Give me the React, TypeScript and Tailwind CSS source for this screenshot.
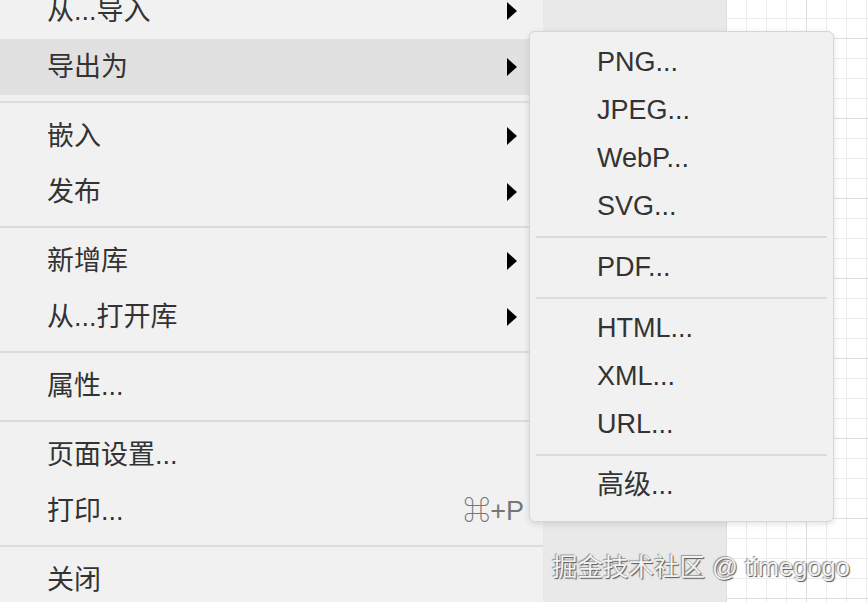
import React from "react";

type Item = { label: string; arrow?: boolean; hover?: boolean; shortcut?: string } | "sep";

const mainItems: Item[] = [
  { label: "从...导入", arrow: true },
  { label: "导出为", arrow: true, hover: true },
  "sep",
  { label: "嵌入", arrow: true },
  { label: "发布", arrow: true },
  "sep",
  { label: "新增库", arrow: true },
  { label: "从...打开库", arrow: true },
  "sep",
  { label: "属性..." },
  "sep",
  { label: "页面设置..." },
  { label: "打印...", shortcut: "⌘+P" },
  "sep",
  { label: "关闭" },
];

const subItems: (string | "sep")[] = [
  "PNG...",
  "JPEG...",
  "WebP...",
  "SVG...",
  "sep",
  "PDF...",
  "sep",
  "HTML...",
  "XML...",
  "URL...",
  "sep",
  "高级...",
];

const font = { fontFamily: '"Liberation Sans", "Noto Sans CJK SC", sans-serif' };

function Arrow() {
  return (
    <svg width="10" height="18" viewBox="0 0 10 18" className="shrink-0">
      <path d="M0 0 L10 9 L0 18 Z" fill="#000" />
    </svg>
  );
}

export default function App() {
  return (
    <div className="relative flex h-[602px] w-[868px] overflow-hidden text-[#333]" style={font}>
      {/* main menu */}
      <div className="w-[543px] shrink-0 bg-[#f1f1f1]">
        <div className="-mt-[17px]">
          {mainItems.map((it, i) =>
            it === "sep" ? (
              <div key={i} className="flex h-[13px] items-center">
                <div className="h-[2px] w-full bg-[#dcdcdc]" />
              </div>
            ) : (
              <div
                key={i}
                className={`flex h-[56px] items-center justify-between pl-[47px] pr-[26px] text-[27px] ${
                  it.hover ? "bg-[#e1e1e1]" : ""
                }`}
              >
                <span>{it.label}</span>
                {it.arrow && <Arrow />}
                {it.shortcut && <span className="-mr-[7px] text-[#777]">{it.shortcut}</span>}
              </div>
            )
          )}
        </div>
      </div>

      {/* side panel */}
      <div className="w-[183px] shrink-0 bg-[#e9e9e9]" />

      {/* grid canvas */}
      <div
        className="flex-1 bg-white"
        style={{
          backgroundImage:
            "linear-gradient(to right, #dedede 1px, transparent 1px), linear-gradient(to bottom, #dedede 1px, transparent 1px), linear-gradient(to right, #ececec 1px, transparent 1px), linear-gradient(to bottom, #ececec 1px, transparent 1px)",
          backgroundSize: "80px 80px, 80px 80px, 20px 20px, 20px 20px",
          backgroundPosition: "0 38px, 0 38px, 0 18px, 0 18px",
        }}
      />

      {/* submenu */}
      <div className="absolute left-[529px] top-[31px] h-[491px] w-[305px] rounded-[6px] border border-[#d6d6d6] bg-[#f1f1f1] pt-[6px] shadow-[0_2px_6px_rgba(0,0,0,0.12)]">
        {subItems.map((s, i) =>
          s === "sep" ? (
            <div key={i} className="flex h-[13px] items-center px-[6px]">
              <div className="h-[2px] w-full bg-[#dcdcdc]" />
            </div>
          ) : (
            <div key={i} className="flex h-[48px] items-center pl-[67px] text-[27px]">
              {s}
            </div>
          )
        )}
      </div>

      {/* watermark */}
      <div
        className="absolute left-[552px] top-[550px] text-[25.5px] leading-[35px] text-[#f2f2f2]"
        style={{ textShadow: "1px 1px 1px #555, -1px -1px 1px #999" }}
      >
        掘金技术社区 @ timegogo
      </div>
    </div>
  );
}
